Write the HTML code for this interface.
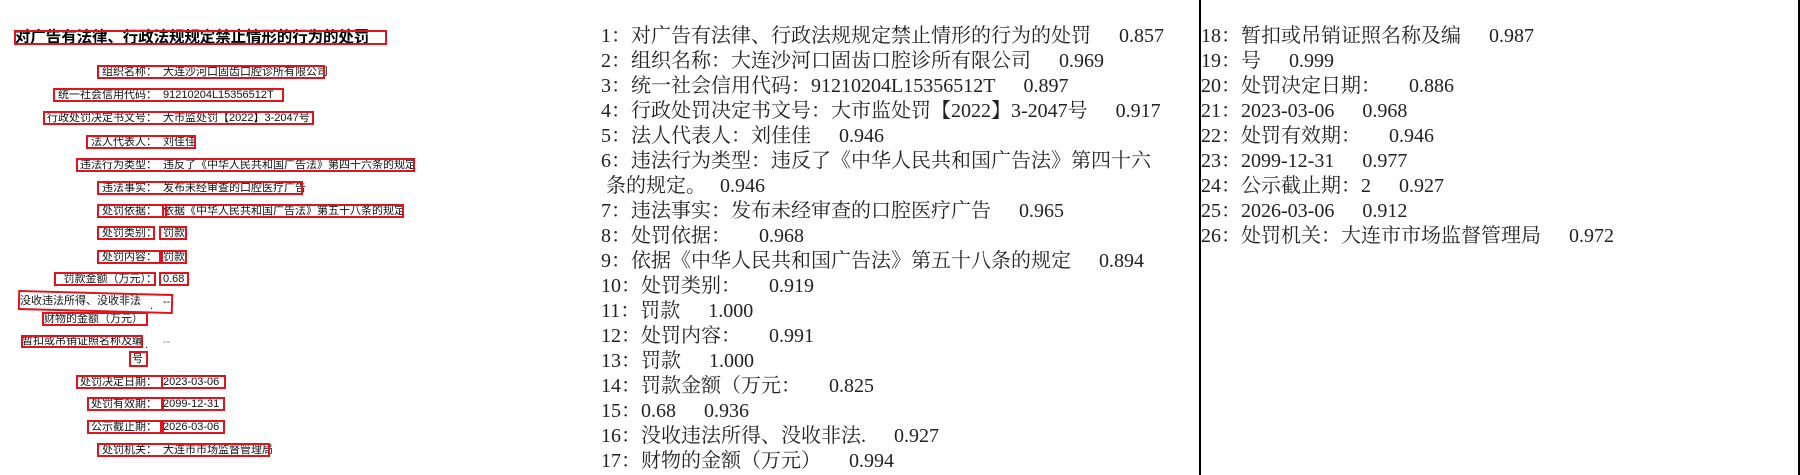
<!DOCTYPE html>
<html><head><meta charset="utf-8"><style>
html,body{margin:0;padding:0;background:#fff;}
body{width:1800px;height:475px;position:relative;overflow:hidden;}
.b{position:absolute;border:2px solid #e0141e;box-sizing:border-box;}
.t{position:absolute;font-family:"Liberation Sans","Noto Sans CJK SC",sans-serif;font-size:11px;line-height:14px;color:#111;white-space:nowrap;}
.l{position:absolute;left:0;width:157px;text-align:right;font-family:"Liberation Sans","Noto Sans CJK SC",sans-serif;font-size:11px;line-height:14px;color:#111;white-space:nowrap;}
.col{position:absolute;top:24px;font-family:"Liberation Serif","Noto Serif CJK SC",serif;font-size:20px;line-height:25px;color:#222;white-space:pre;}
.s{margin-left:28px;}
</style></head><body>
<!-- left panel -->
<div class="t" style="left:15px;top:30px;font-size:15.5px;line-height:15px;font-weight:bold;color:#000;letter-spacing:-0.1px">对广告有法律、行政法规规定禁止情形的行为的处罚</div>
<div class="b" style="left:14px;top:30px;width:373px;height:15px"></div>

<div class="l" style="top:65px">组织名称：</div><div class="t" style="left:163px;top:65px">大连沙河口固齿口腔诊所有限公司</div>
<div class="b" style="left:97px;top:65px;width:228px;height:14px"></div>

<div class="l" style="top:88px">统一社会信用代码：</div><div class="t" style="left:163px;top:88px">91210204L15356512T</div>
<div class="b" style="left:53px;top:88px;width:231px;height:14px"></div>

<div class="l" style="top:111px">行政处罚决定书文号：</div><div class="t" style="left:163px;top:111px">大市监处罚【2022】3-2047号</div>
<div class="b" style="left:43px;top:111px;width:271px;height:14px"></div>

<div class="l" style="top:135px">法人代表人：</div><div class="t" style="left:163px;top:135px">刘佳佳</div>
<div class="b" style="left:86px;top:135px;width:110px;height:14px"></div>

<div class="l" style="top:158px">违法行为类型：</div><div class="t" style="left:163px;top:158px">违反了《中华人民共和国广告法》第四十六条的规定</div>
<div class="b" style="left:76px;top:158px;width:339px;height:14px"></div>

<div class="l" style="top:181px">违法事实：</div><div class="t" style="left:163px;top:181px">发布未经审查的口腔医疗广告</div>
<div class="b" style="left:97px;top:181px;width:206px;height:14px"></div>

<div class="l" style="top:204px">处罚依据：</div><div class="t" style="left:163px;top:204px">依据《中华人民共和国广告法》第五十八条的规定</div>
<div class="b" style="left:97px;top:204px;width:70px;height:14px"></div>
<div class="b" style="left:162px;top:204px;width:242px;height:14px"></div>

<div class="l" style="top:226px">处罚类别：</div><div class="t" style="left:163px;top:226px">罚款</div>
<div class="b" style="left:97px;top:226px;width:58px;height:14px"></div>
<div class="b" style="left:159px;top:226px;width:28px;height:14px"></div>

<div class="l" style="top:250px">处罚内容：</div><div class="t" style="left:163px;top:250px">罚款</div>
<div class="b" style="left:97px;top:250px;width:64px;height:14px"></div>
<div class="b" style="left:161px;top:250px;width:26px;height:14px"></div>

<div class="l" style="top:272px">罚款金额（万元）：</div><div class="t" style="left:163px;top:272px">0.68</div>
<div class="b" style="left:54px;top:272px;width:102px;height:14px"></div>
<div class="b" style="left:159px;top:272px;width:30px;height:14px"></div>

<div class="t" style="left:20px;top:294px">没收违法所得、没收非法</div><div class="t" style="left:150px;top:299px">.</div><div class="t" style="left:163px;top:295px">--</div>
<div class="b" style="left:18px;top:292px;width:155px;height:20px;transform:rotate(1.5deg)"></div>
<div class="t" style="left:44px;top:312px">财物的金额（万元）</div>
<div class="b" style="left:42px;top:312px;width:106px;height:14px"></div>

<div class="t" style="left:22px;top:334px">暂扣或吊销证照名称及编</div><div class="t" style="left:145px;top:338px">.</div><div class="t" style="left:163px;top:335px;color:#888">--</div>
<div class="b" style="left:21px;top:335px;width:122px;height:13px"></div>
<div class="t" style="left:132px;top:352px">号</div>
<div class="b" style="left:129px;top:351px;width:19px;height:16px"></div>

<div class="l" style="top:375px">处罚决定日期：</div><div class="t" style="left:163px;top:375px">2023-03-06</div>
<div class="b" style="left:76px;top:375px;width:87px;height:14px"></div>
<div class="b" style="left:161px;top:375px;width:65px;height:14px"></div>

<div class="l" style="top:397px">处罚有效期：</div><div class="t" style="left:163px;top:397px">2099-12-31</div>
<div class="b" style="left:87px;top:397px;width:77px;height:14px"></div>
<div class="b" style="left:161px;top:397px;width:64px;height:14px"></div>

<div class="l" style="top:420px">公示截止期：</div><div class="t" style="left:163px;top:420px">2026-03-06</div>
<div class="b" style="left:87px;top:420px;width:77px;height:14px"></div>
<div class="b" style="left:160px;top:420px;width:65px;height:14px"></div>

<div class="l" style="top:443px">处罚机关：</div><div class="t" style="left:163px;top:443px">大连市市场监督管理局</div>
<div class="b" style="left:97px;top:443px;width:173px;height:14px"></div>

<!-- middle column -->
<div class="col" style="left:601px">1：对广告有法律、行政法规规定禁止情形的行为的处罚<span class="s">0.857</span>
2：组织名称：大连沙河口固齿口腔诊所有限公司<span class="s">0.969</span>
3：统一社会信用代码：91210204L15356512T<span class="s">0.897</span>
4：行政处罚决定书文号：大市监处罚【2022】3-2047号<span class="s">0.917</span>
5：法人代表人：刘佳佳<span class="s">0.946</span>
6：违法行为类型：违反了《中华人民共和国广告法》第四十六
 条的规定。<span class="s" style="margin-left:14px">0.946</span>
7：违法事实：发布未经审查的口腔医疗广告<span class="s">0.965</span>
8：处罚依据：<span class="s">0.968</span>
9：依据《中华人民共和国广告法》第五十八条的规定<span class="s">0.894</span>
10：处罚类别：<span class="s">0.919</span>
11：罚款<span class="s">1.000</span>
12：处罚内容：<span class="s">0.991</span>
13：罚款<span class="s">1.000</span>
14：罚款金额（万元：<span class="s">0.825</span>
15：0.68<span class="s">0.936</span>
16：没收违法所得、没收非法.<span class="s">0.927</span>
17：财物的金额（万元）<span class="s">0.994</span></div>

<div style="position:absolute;left:1199px;top:0;width:2px;height:475px;background:#000"></div>
<div style="position:absolute;left:1798px;top:0;width:2px;height:475px;background:#000"></div>

<!-- right column -->
<div class="col" style="left:1201px">18：暂扣或吊销证照名称及编<span class="s">0.987</span>
19：号<span class="s">0.999</span>
20：处罚决定日期：<span class="s">0.886</span>
21：2023-03-06<span class="s">0.968</span>
22：处罚有效期：<span class="s">0.946</span>
23：2099-12-31<span class="s">0.977</span>
24：公示截止期：2<span class="s">0.927</span>
25：2026-03-06<span class="s">0.912</span>
26：处罚机关：大连市市场监督管理局<span class="s">0.972</span></div>
</body></html>
